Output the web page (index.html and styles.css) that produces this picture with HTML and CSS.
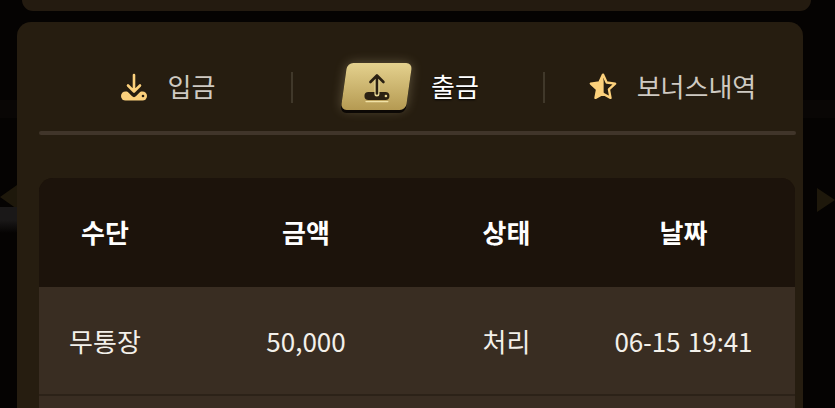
FILE: index.html
```html
<!DOCTYPE html>
<html lang="ko">
<head>
<meta charset="UTF-8" />
<title>출금 내역</title>
<link rel="stylesheet" href="styles.css">
</head>
<body>
<i class="deco band"></i>
<i class="deco arrow-left"></i>
<i class="deco arrow-right"></i>
<i class="deco speckle"></i>

<div class="top-card"></div>

<section class="panel">
  <nav class="tabs">
    <a class="tab">
      <svg class="tab-icon" viewBox="0 0 28 28" width="28" height="28">
        <rect x="1" y="18.500" width="26" height="9" rx="4.500" fill="#fcd17c"/>
        <path d="M7.500 14.500 14 21l6.500-6.500" fill="none" stroke="#261d10" stroke-width="6" stroke-linecap="round" stroke-linejoin="round"/>
        <path d="M14 2v16M8 12.500l6 6 6-6" fill="none" stroke="#fcd17c" stroke-width="2.600" stroke-linecap="round" stroke-linejoin="round"/>
        <circle cx="23" cy="23" r="1.300" fill="#261d10"/>
      </svg>
      <span>입금</span>
    </a>
    <i class="sep"></i>
    <a class="tab active">
      <span class="tab-badge">
        <svg viewBox="0 0 28 28" width="28" height="28">
          <rect x="1.500" y="19" width="25" height="8" rx="4" fill="#2a2012"/>
          <path d="M14 21V6" stroke="#e6d796" stroke-width="5" stroke-linecap="round"/>
          <path d="M14 20.500V2.500M7.500 9 14 2.500 20.500 9" fill="none" stroke="#2a2012" stroke-width="2.600" stroke-linecap="round" stroke-linejoin="round"/>
          <circle cx="23" cy="23" r="1.300" fill="#e8d48e"/>
          <path d="M3 28.600h22" stroke="#f1e2a6" stroke-width="1.200" stroke-linecap="round"/>
        </svg>
      </span>
      <span>출금</span>
    </a>
    <i class="sep"></i>
    <a class="tab">
      <svg class="tab-icon" viewBox="1 1 26 26" width="28" height="28">
        <path d="M14 2.500l3.400 7.300 7.900 1-5.800 5.400 1.500 7.900-7-3.900-7 3.900 1.500-7.900-5.800-5.400 7.900-1z" fill="none" stroke="#fcd17c" stroke-width="2.200" stroke-linejoin="round"/>
        <path d="M14 2.500l-3.400 7.300-7.900 1 5.800 5.400-1.500 7.900 7-3.900.6-.3V9z" fill="#fcd17c"/>
      </svg>
      <span>보너스내역</span>
    </a>
  </nav>
  <div class="tabs-rule"></div>

  <div class="history">
    <div class="row head">
      <span>수단</span><span>금액</span><span>상태</span><span>날짜</span>
    </div>
    <div class="row">
      <span>무통장</span><span>50,000</span><span>처리</span><span>06<b class="punct">-</b>15 19<b class="punct">:</b>41</span>
    </div>
    <div class="row"></div>
  </div>
</section>
</body>
</html>
```

FILE: styles.css
```css
* {
  box-sizing: border-box;
}
body {
  margin: 0;
  position: relative;
  height: 408px;
  padding: 0 32px 0 17px;
  overflow: hidden;
  background: #050302;
  font-family: "Noto Sans CJK KR", "Noto Sans", sans-serif;
  color: #fff;
}

/* background behind the cards */
.deco {
  position: absolute;
}
.band {
  left: 0;
  right: 0;
  top: 100px;
  height: 18px;
  background: #090605;
}
.arrow-left {
  left: 0;
  top: 185px;
  width: 17px;
  height: 24px;
  background: #1e180b;
  clip-path: polygon(0 50%, 100% 0, 100% 100%);
}
.arrow-right {
  right: 0;
  top: 188px;
  width: 18px;
  height: 24px;
  background: #1e180b;
  clip-path: polygon(100% 50%, 0 0, 0 100%);
}
.speckle {
  left: 0;
  top: 207px;
  width: 17px;
  height: 26px;
  background: linear-gradient(180deg, #1a1818 0%, #1a1818 50%, #050302 100%);
}

.top-card {
  height: 11px;
  width: 789px;
  margin: 0 0 11px 5px;
  background: #241b10;
  border-radius: 0 0 18px 18px;
}
.panel {
  position: relative;
  width: 786px;
  height: 386px;
  padding: 0 8px 0 22px;
  overflow: hidden;
  background: #261d10;
  border-radius: 14px 14px 0 0;
}
.tabs {
  height: 109px;
  padding-top: 18px;
  display: grid;
  grid-template-columns: 252px 2px 250px 2px 250px;
  align-items: center;
}
.tab {
  display: flex;
  align-items: center;
  justify-content: center;
  gap: 20px;
  padding-left: 5px;
  font-size: 26px;
  color: #cfcac2;
}
.tab.active {
  padding: 0 13px 0 0;
  gap: 22px;
  color: #fff;
  text-shadow: 0 1px 2px #000;
}
.tab-icon {
  flex: none;
  margin-top: 3px;
}
.sep {
  height: 31px;
  margin-top: 4px;
  background: #40382a;
}
.tab-badge {
  width: 65px;
  height: 47px;
  margin-top: 1px;
  display: flex;
  align-items: center;
  justify-content: center;
  background: linear-gradient(180deg, #e4d18e 0%, #b59a52 100%);
  border-radius: 6px;
  transform: skewX(-8deg);
  box-shadow: 0 3px 0 #0c0805, 0 0 12px rgba(236, 220, 170, 0.3);
}
.tab-badge svg {
  overflow: visible;
  transform: skewX(8deg);
}
.tabs-rule {
  height: 4px;
  width: 757px;
  background: #40352a;
  border-radius: 2px;
}
.history {
  margin-top: 43px;
  width: 756px;
  background: #1c130b;
  border-radius: 14px 14px 0 0;
  overflow: hidden;
}
.row {
  display: grid;
  grid-template-columns: 132px 270px 131px 223px;
  align-items: center;
  justify-items: center;
  height: 109px;
  font-size: 26px;
  background: #392d22;
  border-bottom: 2px solid #2c2218;
  color: #f3f0ea;
}
.row .punct {
  font-family: "Noto Sans", sans-serif;
  font-weight: 400;
}
.row.head {
  padding-bottom: 3px;
  background: #1c130b;
  font-weight: 700;
  color: #fff;
  border-bottom: 0;
}
```
